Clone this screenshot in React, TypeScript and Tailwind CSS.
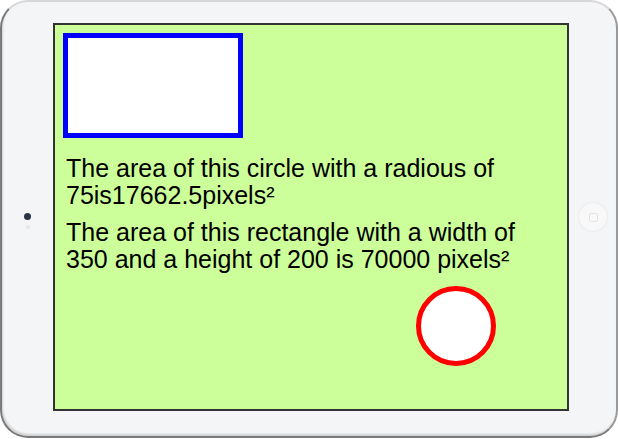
export default function App() {
  return (
    <div className="w-[618px] h-[439px] bg-white">
      {/* tablet body */}
      <div className="flex h-[438px] w-[618px] items-center rounded-[28px] border-2 border-[#7a7a7a] border-t-[#d8d8d8] border-r-[#9a9a9a] bg-[#f4f5f7] pb-[4px] shadow-[inset_1px_-2px_2px_rgba(0,0,0,0.15)]">
        {/* camera */}
        <div className="flex w-[51px] flex-col items-center gap-[5px] pt-[8px]">
          <div className="h-[7px] w-[7px] rounded-full bg-[#2b3446]" />
          <div className="h-[4px] w-[4px] rounded-full bg-[#e6e7ea]" />
        </div>

        {/* screen */}
        <div className="h-[388px] w-[516px] border-2 border-[#333333] bg-[#ccff99] p-[8px] font-['Liberation_Sans',Arial,sans-serif] text-black">
          <div className="h-[105px] w-[180px] border-[5px] border-[#0000ff] bg-white" />
          <div className="ml-[3px] mt-[17px] w-[480px] text-[25px] leading-[27px]">
            <p>The area of this circle with a radious of 75is17662.5pixels²</p>
            <p className="mt-[10px]">
              The area of this rectangle with a width of 350 and a height of 200 is 70000 pixels²
            </p>
          </div>
          <div className="ml-[353px] mt-[13px] h-[80px] w-[80px] rounded-full border-[5px] border-[#ff0000] bg-white" />
        </div>

        {/* home button */}
        <div className="flex flex-1 justify-center pl-[1px]">
          <div className="flex h-[28px] w-[28px] items-center justify-center rounded-full bg-[#f8f8f9] shadow-[0_0_2px_rgba(0,0,0,0.12)]">
            <div className="h-[9px] w-[9px] rounded-[2px] border border-[#e2e3e6]" />
          </div>
        </div>
      </div>
    </div>
  );
}
